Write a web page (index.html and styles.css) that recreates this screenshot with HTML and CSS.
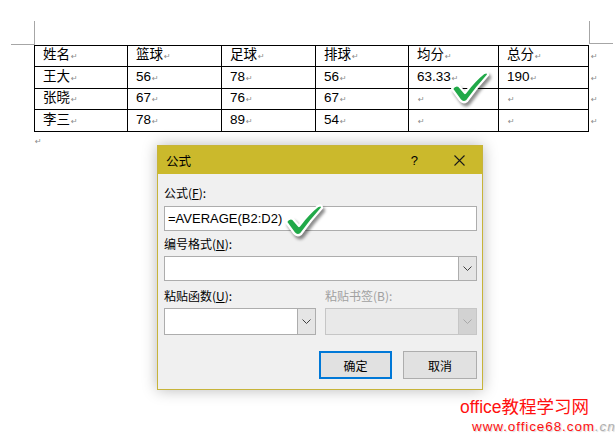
FILE: index.html
```html
<!DOCTYPE html>
<html lang="zh-CN">
<head>
    <meta charset="UTF-8">
    <title>公式</title>
    <link rel="stylesheet" href="styles.css">
</head>
<body>
<div class="page">
    <div class="corners">
        <div class="corner corner-left"></div>
        <div class="corner corner-right"></div>
    </div>

    <table class="score">
        <tr><td>姓名<i>↵</i></td><td>篮球<i>↵</i></td><td>足球<i>↵</i></td><td>排球<i>↵</i></td><td>均分<i>↵</i></td><td>总分<i>↵</i></td><td class="end"><i>↵</i></td></tr>
        <tr class="tall"><td>王大<i>↵</i></td><td>56<i>↵</i></td><td>78<i>↵</i></td><td>56<i>↵</i></td><td>63.33<i>↵</i></td><td>190<i>↵</i></td><td class="end"><i>↵</i></td></tr>
        <tr><td>张晓<i>↵</i></td><td>67<i>↵</i></td><td>76<i>↵</i></td><td>67<i>↵</i></td><td><i>↵</i></td><td><i>↵</i></td><td class="end"><i>↵</i></td></tr>
        <tr class="tall"><td>李三<i>↵</i></td><td>78<i>↵</i></td><td>89<i>↵</i></td><td>54<i>↵</i></td><td><i>↵</i></td><td><i>↵</i></td><td class="end"><i>↵</i></td></tr>
    </table>
    <div class="para"><i>↵</i></div>

    <div class="dialog">
        <div class="titlebar">
            <span class="title">公式</span>
            <span class="help">?</span>
            <svg class="close" width="11" height="11" viewBox="0 0 11 11"><path d="M0.5 0.5 L10.5 10.5 M10.5 0.5 L0.5 10.5" stroke="#1a1a1a" stroke-width="1.1"/></svg>
        </div>
        <div class="dlg-body">
            <div class="label">公式(<u>F</u>):</div>
            <div class="textbox">=AVERAGE(B2:D2)</div>

            <div class="label">编号格式(<u>N</u>):</div>
            <div class="combo">
                <div class="combo-field"></div>
                <div class="combo-arrow"><svg width="9" height="5" viewBox="0 0 9 5"><path d="M0.5 0.5 L4.5 4.5 L8.5 0.5" fill="none" stroke="#404040" stroke-width="1"/></svg></div>
            </div>

            <div class="pair">
                <div class="pair-col">
                    <div class="label">粘贴函数(<u>U</u>):</div>
                    <div class="combo combo-low">
                        <div class="combo-field"></div>
                        <div class="combo-arrow"><svg width="9" height="5" viewBox="0 0 9 5"><path d="M0.5 0.5 L4.5 4.5 L8.5 0.5" fill="none" stroke="#404040" stroke-width="1"/></svg></div>
                    </div>
                </div>
                <div class="pair-col">
                    <div class="label disabled">粘贴书签(B):</div>
                    <div class="combo combo-low combo-off">
                        <div class="combo-field"></div>
                        <div class="combo-arrow"><svg width="9" height="5" viewBox="0 0 9 5"><path d="M0.5 0.5 L4.5 4.5 L8.5 0.5" fill="none" stroke="#a8a8a8" stroke-width="1"/></svg></div>
                    </div>
                </div>
            </div>

            <div class="buttons">
                <button class="btn btn-default">确定</button>
                <button class="btn">取消</button>
            </div>
        </div>
    </div>

    <svg class="check check-table" width="40" height="36" viewBox="0 0 40 36">
        <path d="M2 20 Q5 15 9 17 L15 24 Q25 11 34 4 Q38 2 38 6 Q27 18 17 32 Q13 35 10 31 Z" fill="#21a949" stroke="#fff" stroke-width="2.2" stroke-linejoin="round"/>
    </svg>
    <svg class="check check-dialog" width="40" height="36" viewBox="0 0 40 36">
        <path d="M2 20 Q5 15 9 17 L15 24 Q25 11 34 4 Q38 2 38 6 Q27 18 17 32 Q13 35 10 31 Z" fill="#21a949" stroke="#fff" stroke-width="2.2" stroke-linejoin="round"/>
    </svg>

    <div class="watermark">
        <div class="wm-name">office教程学习网</div>
        <div class="wm-url">www.office68.com<span>.cn</span></div>
    </div>
</div>
</body>
</html>
```

FILE: styles.css
```css
body {
    margin: 0;
    background: #fff;
    font-family: "Liberation Sans", "Noto Sans CJK SC", sans-serif;
    color: #000;
}

.page {
    position: relative;
    width: 615px;
    height: 445px;
    overflow: hidden;
}

.corners {
    display: flex;
    justify-content: space-between;
    padding: 21px 2px 0 11px;
}
.corner {
    width: 23px;
    height: 23px;
    border-bottom: 1px solid #a6a6a6;
}
.corner-left {
    border-right: 1px solid #a6a6a6;
}
.corner-right {
    width: 23px;
    height: 22px;
    border-left: 1px solid #a6a6a6;
}

.score {
    border-collapse: collapse;
    margin-left: 34px;
    font-size: 13.5px;
}
.score td {
    border: 1px solid #000;
    height: 20px;
    padding: 0 0 0 8px;
    line-height: 18px;
    vertical-align: middle;
    white-space: nowrap;
}
.score tr.tall td {
    height: 21px;
}
.score td:nth-child(1) { width: 84px; }
.score td:nth-child(2) { width: 85px; }
.score td:nth-child(3) { width: 85px; }
.score td:nth-child(4) { width: 84px; }
.score td:nth-child(5) { width: 81px; }
.score td:nth-child(6) { width: 81px; }
.score td.end {
    border: none;
    padding-left: 1px;
}

i {
    font-style: normal;
    font-family: "DejaVu Sans", sans-serif;
    font-size: 8px;
    color: #8a8a8a;
    margin-left: 1px;
}

.para {
    margin: 1px 0 0 34px;
    line-height: 12px;
}

.dialog {
    position: absolute;
    left: 157px;
    top: 145px;
    width: 324px;
    height: 243px;
    background: #f0f0f0;
    border: 1px solid #c7b43a;
    box-shadow: 0 0 14px rgba(0, 0, 0, 0.28);
    font-family: "Noto Sans CJK SC", "Liberation Sans", sans-serif;
    font-size: 12px;
}

.titlebar {
    height: 28px;
    background: #cbb92c;
    display: flex;
    align-items: center;
    padding: 0 17px 0 8px;
}
.title {
    flex: 1;
    font-size: 12.5px;
}
.help {
    font-family: "Liberation Sans", sans-serif;
    font-size: 13px;
    margin-right: 36px;
}

.dlg-body {
    padding: 9px 5px 0 6px;
}
.label {
    line-height: 20px;
    height: 20px;
}
.label u {
    text-decoration: underline;
}
.label.disabled {
    color: #a0a0a0;
}

.textbox {
    height: 23px;
    margin: 3px 0 3px;
    background: #fff;
    border: 1px solid #adadad;
    font-family: "Liberation Sans", sans-serif;
    font-size: 13px;
    line-height: 23px;
    padding-left: 3px;
}

.combo {
    display: flex;
    height: 23px;
    margin-top: 2px;
    border: 1px solid #adadad;
    background: #fff;
}
.combo-field {
    flex: 1;
}
.combo-arrow {
    width: 17px;
    background: #e5e5e5;
    border-left: 1px solid #adadad;
    display: flex;
    align-items: center;
    justify-content: center;
}
.combo-low {
    height: 25px;
}
.combo-off {
    background: #e9e9e9;
    border-color: #c6c6c6;
}
.combo-off .combo-arrow {
    background: #d2d2d2;
    border-left-color: #c6c6c6;
}

.pair {
    display: flex;
    gap: 9px;
    margin-top: 5px;
}
.pair-col {
    width: 152px;
}

.buttons {
    display: flex;
    justify-content: flex-end;
    gap: 11px;
    margin-top: 16px;
}
.btn {
    width: 74px;
    height: 28px;
    background: #e1e1e1;
    border: 1px solid #adadad;
    font-family: "Noto Sans CJK SC", sans-serif;
    font-size: 12px;
    padding: 0;
}
.btn-default {
    border: 2px solid #0078d7;
    width: 73px;
}

.check {
    position: absolute;
    filter: drop-shadow(2px 3px 1.5px rgba(0, 0, 0, 0.45));
}
.check-table {
    left: 450px;
    top: 69px;
}
.check-dialog {
    left: 284px;
    top: 202px;
}

.watermark {
    position: absolute;
    left: 460px;
    top: 396px;
    color: #ff1010;
}
.wm-name {
    font-family: "Liberation Sans", "Noto Sans CJK SC", sans-serif;
    font-size: 17.5px;
    line-height: 22px;
}
.wm-url {
    margin: 2px 0 0 12px;
    font-family: "Liberation Sans", sans-serif;
    font-size: 13.5px;
    letter-spacing: 0.9px;
    line-height: 14px;
    text-shadow: 1px 1px 1px rgba(0, 0, 0, 0.15);
}
.wm-url span {
    color: #b0b0b0;
    font-style: italic;
}
```
